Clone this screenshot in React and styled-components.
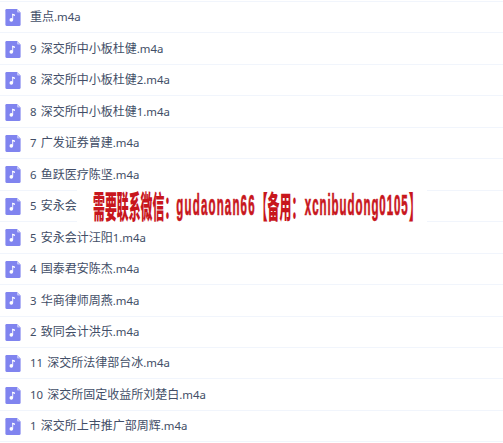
import React from "react";
import styled, { createGlobalStyle } from "styled-components";

const Global = createGlobalStyle`
  body { margin: 0; background: #fff; overflow: hidden; }
`;

const List = styled.div`
  position: relative;
  box-sizing: border-box;
  width: 503px;
  height: 443px;
  padding-top: 1px;
  overflow: hidden;
  background: #fff;
`;

const Row = styled.div`
  box-sizing: border-box;
  display: flex;
  align-items: center;
  gap: 9px;
  height: 31.46px;
  padding-left: 5px;
  border-top: 1px solid #f1f5fc;
`;

const FileIcon = styled.svg`
  flex: none;
  width: 16px;
  height: 17px;
  margin-top: 1px;
`;

const Name = styled.span`
  padding-bottom: 0.6px;
  font: 12px/18px "Noto Sans CJK SC", sans-serif;
  color: #424e67;
  white-space: pre;
`;

const Latin = styled.span`
  font-family: "Noto Sans", sans-serif;
  font-size: 11.4px;
  word-spacing: 1.2px;
`;

const Banner = styled.div`
  position: absolute;
  left: 77px;
  top: 183px;
  box-sizing: border-box;
  display: flex;
  align-items: center;
  width: 350px;
  height: 44px;
  padding: 0 0 0 16px;
  background: #fff;
`;

const Notice = styled.div`
  display: flex;
  flex: none;
  align-items: center;
  color: #c8161d;
  line-height: 40px;
  white-space: pre;
  transform: scaleX(0.384);
  transform-origin: 0 50%;
`;

const Label = styled.span`
  padding-bottom: 1px;
  font-family: "Noto Sans CJK SC", sans-serif;
  font-size: 31px;
  font-weight: 800;
`;

const Account = styled.span`
  padding-left: ${(p) => p.$indent || 0}px;
  font-family: "Liberation Sans", sans-serif;
  font-size: 30px;
  font-weight: 700;
  letter-spacing: ${(p) => p.$gap}px;
  -webkit-text-stroke: 0.7px #c8161d;
`;

const files = [
  ["", "重点", ".m4a"],
  ["9 ", "深交所中小板杜健", ".m4a"],
  ["8 ", "深交所中小板杜健", "2.m4a"],
  ["8 ", "深交所中小板杜健", "1.m4a"],
  ["7 ", "广发证券曾建", ".m4a"],
  ["6 ", "鱼跃医疗陈坚", ".m4a"],
  ["5 ", "安永会", ""],
  ["5 ", "安永会计汪阳", "1.m4a"],
  ["4 ", "国泰君安陈杰", ".m4a"],
  ["3 ", "华商律师周燕", ".m4a"],
  ["2 ", "致同会计洪乐", ".m4a"],
  ["11 ", "深交所法律部台冰", ".m4a"],
  ["10 ", "深交所固定收益所刘楚白", ".m4a"],
  ["1 ", "深交所上市推广部周辉", ".m4a"],
  null,
];

function AudioIcon() {
  return (
    <FileIcon viewBox="0 0 16 17">
      <path d="M1.5 0H12L15.6 3.6V15.5Q15.6 17 14.1 17H1.9Q.4 17 .4 15.5V1.3Q.4 0 1.5 0Z" fill="#8084ef" />
      <path d="M12 0V2.6Q12 3.6 13 3.6H15.6Z" fill="#c3c5fa" />
      <circle cx="6.3" cy="10.9" r="1.8" fill="#fff" />
      <path d="M7.7 4.9V10.9" stroke="#fff" strokeWidth="0.9" />
      <path d="M7.3 4.6C7.9 5.3 9.3 5.1 10 5.7V7C9.2 6.6 8.1 6.7 7.3 6.2Z" fill="#fff" />
    </FileIcon>
  );
}

export default function App() {
  return (
    <>
      <Global />
      <List>
        {files.map((file, i) => (
          <Row key={i}>
            {file && (
              <>
                <AudioIcon />
                <Name>
                  <Latin>{file[0]}</Latin>
                  {file[1]}
                  <Latin>{file[2]}</Latin>
                </Name>
              </>
            )}
          </Row>
        ))}
        <Banner>
          <Notice>
            <Label>需要联系微信：</Label>
            <Account $gap={3}>gudaonan66</Account>
            <Label>【备用：</Label>
            <Account $indent={4} $gap={2.4}>xcnibudong0105</Account>
            <Label>】</Label>
          </Notice>
        </Banner>
      </List>
    </>
  );
}
